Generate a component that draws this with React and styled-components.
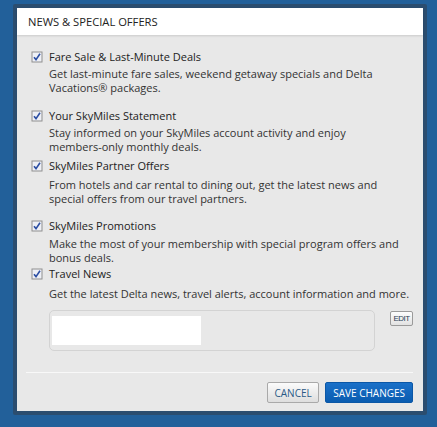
import React from "react";
import styled, { createGlobalStyle } from "styled-components";

const Global = createGlobalStyle`
  html, body {
    margin: 0;
    padding: 0;
    background: #22609a;
    height: 427px;
    overflow: hidden;
  }
`;

const Frame = styled.div`
  margin: 4px 0 0 13px;
  width: 406px;
  padding: 4px;
  background: #2b4d6f;
  border-radius: 2px;
`;

const Panel = styled.div`
  height: 403px;
  background: #e8e8e8;
  font-family: "Open Sans", "Noto Sans", sans-serif;
  color: #333;
  display: flex;
  flex-direction: column;
`;

const Header = styled.div`
  height: 27px;
  background: #fff;
  padding-left: 11px;
  display: flex;
  align-items: center;
  font-size: 11.2px;
  color: #222;
  box-shadow: 0 1px 2px rgba(0, 0, 0, 0.12);
`;

const Body = styled.div`
  padding: 15px 10px 0 14px;
  flex: 1;
`;

const Item = styled.div`
  padding-bottom: ${(p) => p.$after}px;
`;

const TitleRow = styled.label`
  display: flex;
  align-items: center;
  gap: 6px;
  font-size: 11px;
  line-height: 13px;
  color: #222;
`;

const Desc = styled.p`
  margin: ${(p) => p.$top}px 0 0 18px;
  font-size: 11px;
  line-height: 14px;
  color: #333;
`;

const NoWrap = styled.span`
  white-space: nowrap;
`;

const Box = styled.div`
  width: 12px;
  height: 12px;
  flex: none;
`;

const InfoRow = styled.div`
  display: flex;
  align-items: flex-start;
  margin: 9px 0 0 18px;
  gap: 15px;
`;

const Card = styled.div`
  width: 326px;
  height: 41px;
  border: 1px solid #d3d3d3;
  border-radius: 5px;
  padding: 5px 0 0 2px;
  box-sizing: border-box;
`;

const Blank = styled.div`
  width: 149px;
  height: 29px;
  background: #fff;
`;

const EditBtn = styled.button`
  margin-top: 1px;
  width: 23px;
  height: 15px;
  padding: 0;
  border: 1px solid #9a9a9a;
  border-radius: 2px;
  background: linear-gradient(#fdfdfd, #e2e2e2);
  font-family: "Liberation Sans", sans-serif;
  font-size: 8px;
  letter-spacing: -0.5px;
  color: #2c3e55;
`;

const Footer = styled.div`
  margin: 0 10px 0 9px;
  border-top: 1px solid #f8f8f8;
  padding: 9px 0 8px;
  display: flex;
  justify-content: flex-end;
  gap: 6px;
`;

const Button = styled.button`
  height: 21px;
  padding: 0 ${(p) => (p.$primary ? 7 : 6.5)}px;
  border-radius: 2px;
  font-family: "Open Sans", "Noto Sans", sans-serif;
  font-size: 10px;
  border: 1px solid ${(p) => (p.$primary ? "#0b57a6" : "#a9a9a9")};
  background: ${(p) =>
    p.$primary
      ? "linear-gradient(#1a70c8, #0a5cb0)"
      : "linear-gradient(#fbfbfb, #dedede)"};
  color: ${(p) => (p.$primary ? "#fff" : "#2b5a86")};
`;

function Check() {
  return (
    <Box>
      <svg width="12" height="12" viewBox="0 0 12 12">
        <rect x="0.5" y="0.5" width="11" height="11" fill="#8f8f8f" />
        <rect x="1.5" y="1.5" width="9" height="9" fill="#eef0f6" />
        <path d="M3 6.2 L5 8.6 L9 2.8" stroke="#2b4ea3" strokeWidth="1.6" fill="none" />
      </svg>
    </Box>
  );
}

const items = [
  {
    title: "Fare Sale & Last-Minute Deals",
    desc: "Get last-minute fare sales, weekend getaway specials and Delta Vacations® packages.",
    top: 4,
    after: 14,
  },
  {
    title: "Your SkyMiles Statement",
    desc: (
      <>
        Stay informed on your SkyMiles account activity and enjoy{" "}
        <NoWrap>members-only</NoWrap> monthly deals.
      </>
    ),
    top: 4,
    after: 5,
  },
  {
    title: "SkyMiles Partner Offers",
    desc: "From hotels and car rental to dining out, get the latest news and special offers from our travel partners.",
    top: 6,
    after: 13,
  },
  {
    title: "SkyMiles Promotions",
    desc: "Make the most of your membership with special program offers and bonus deals.",
    top: 5,
    after: 2,
  },
  {
    title: "Travel News",
    desc: "Get the latest Delta news, travel alerts, account information and more.",
    top: 7,
    after: 0,
  },
];

export default function App() {
  return (
    <>
      <Global />
      <Frame>
        <Panel>
          <Header>NEWS &amp; SPECIAL OFFERS</Header>
          <Body>
            {items.map((it) => (
              <Item key={it.title} $after={it.after}>
                <TitleRow>
                  <Check />
                  {it.title}
                </TitleRow>
                <Desc $top={it.top}>{it.desc}</Desc>
              </Item>
            ))}
            <InfoRow>
              <Card>
                <Blank />
              </Card>
              <EditBtn>EDIT</EditBtn>
            </InfoRow>
          </Body>
          <Footer>
            <Button>CANCEL</Button>
            <Button $primary>SAVE CHANGES</Button>
          </Footer>
        </Panel>
      </Frame>
    </>
  );
}
